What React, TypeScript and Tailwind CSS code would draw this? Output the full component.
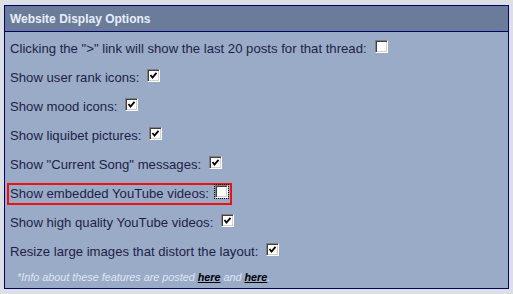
import React from "react";

type Option = { label: string; checked: boolean; focused?: boolean };

const options: Option[] = [
  { label: 'Clicking the ">" link will show the last 20 posts for that thread:', checked: false },
  { label: "Show user rank icons:", checked: true },
  { label: "Show mood icons:", checked: true },
  { label: "Show liquibet pictures:", checked: true },
  { label: 'Show "Current Song" messages:', checked: true },
  { label: "Show embedded YouTube videos:", checked: false, focused: true },
  { label: "Show high quality YouTube videos:", checked: true },
  { label: "Resize large images that distort the layout:", checked: true },
];

const Checkbox = ({ checked, focused }: { checked: boolean; focused?: boolean }) => (
  <span
    className={`mb-[4px] inline-flex h-[13px] w-[13px] shrink-0 items-center justify-center border border-t-[#808080] border-l-[#808080] border-r-white border-b-white bg-white shadow-[inset_1px_1px_0_#404040,inset_-1px_-1px_0_#d4d0c8] ${
      focused ? "outline outline-1 outline-dotted outline-black" : ""
    }`}
  >
    {checked && (
      <svg width="9" height="9" viewBox="0 0 9 9">
        <polyline points="1.5,4 3.5,6.5 7.5,1.8" fill="none" stroke="#000" strokeWidth="1.8" />
      </svg>
    )}
  </span>
);

export default function App() {
  return (
    <div className="h-[294px] w-[513px] bg-[#dcdfe3] px-[4px] pt-[5px] font-['Liberation_Sans',Arial,sans-serif]">
      <div className="h-[284px] w-[505px] border border-[#000066] bg-[#9aabc8]">
        <div className="flex h-[26px] items-center border-b border-[#000066] bg-[#6b7c9a] pl-[5px] text-[12px] font-bold text-[#e8eef8]">
          Website Display Options
        </div>
        <div className="pl-[5px] pt-[2px] text-[13.15px] text-[#1e1e46]">
          {options.map((o) => (
            <div key={o.label} className="flex h-[29px] items-center">
              {o.focused ? (
                <div className="-ml-[3px] flex h-[22px] items-center gap-[6px] border-2 border-[#ee1111] pl-[1px] pr-[2px]">
                  <span>{o.label}</span>
                  <Checkbox checked={o.checked} focused />
                </div>
              ) : (
                <div className="flex items-center gap-[8px]">
                  <span>{o.label}</span>
                  <Checkbox checked={o.checked} />
                </div>
              )}
            </div>
          ))}
          <div className="flex h-[22px] items-center pl-[7px] text-[10.8px] italic text-[#dfe6f2]">
            <span>
              *Info about these features are posted{" "}
              <a className="font-bold text-black underline">here</a> and{" "}
              <a className="font-bold text-black underline">here</a>.
            </span>
          </div>
        </div>
      </div>
    </div>
  );
}
